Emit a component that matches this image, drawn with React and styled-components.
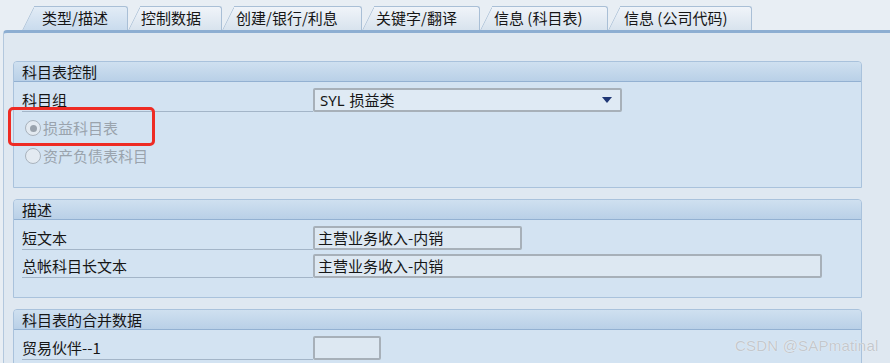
import React from "react";
import styled, { createGlobalStyle } from "styled-components";

const GlobalStyle = createGlobalStyle`
  html, body { margin: 0; padding: 0; }
  body {
    background: #e8eef4;
    font-family: "Noto Sans CJK SC", "Noto Sans", sans-serif;
    overflow: hidden;
  }
`;

const Page = styled.div`
  position: relative;
  width: 890px;
  height: 363px;
  overflow: hidden;
  background: #e8eef4;
`;

const TabStrip = styled.div`
  display: flex;
  align-items: flex-end;
  height: 30px;
  padding-left: 22px;
`;

const Tab = styled.div`
  position: relative;
  box-sizing: border-box;
  width: ${(p) => p.$w}px;
  height: 24px;
  padding-left: ${(p) => p.$pl}px;
  display: flex;
  align-items: center;
  font-size: 15px;
  line-height: 20px;
  color: #161616;
  white-space: nowrap;

  &::before {
    content: "";
    position: absolute;
    left: 0;
    top: 0;
    bottom: 0;
    width: 22px;
    box-sizing: border-box;
    background: ${(p) =>
      p.$active
        ? "linear-gradient(#e2ecf6, #c9dbed)"
        : "linear-gradient(#f0f4f9, #d8e3ee)"};
    border-left: 1px solid #a9bfd6;
    border-top: 1px solid #a9bfd6;
    border-top-left-radius: 3px;
    transform: skewX(-26.5deg);
    transform-origin: bottom left;
  }
  &::after {
    content: "";
    position: absolute;
    left: 12px;
    right: 0;
    top: 0;
    bottom: 0;
    box-sizing: border-box;
    background: ${(p) =>
      p.$active
        ? "linear-gradient(#e2ecf6, #c9dbed)"
        : "linear-gradient(#f0f4f9, #d8e3ee)"};
    border-top: 1px solid #a9bfd6;
    border-right: 1px solid #a9bfd6;
    border-top-right-radius: 3px;
  }
`;

const TabText = styled.span`
  position: relative;
  z-index: 1;
`;

const Content = styled.div`
  margin-left: 3px;
  border-top: 3px solid #8daed2;
  border-left: 1px solid #b3c8de;
  border-top-left-radius: 4px;
  background: #dfe8f1;
  padding: 28px 28px 0 9px;
  display: flex;
  flex-direction: column;
  gap: 11px;
  height: 400px;
`;

const Group = styled.section`
  position: relative;
  width: 849px;
  box-sizing: border-box;
  border: 1px solid #a9c2dc;
  border-radius: 4px 4px 0 0;
  background: #d3e3f2;
`;

const GroupHeader = styled.div`
  height: 19px;
  border-bottom: 1px solid #93b1d2;
  border-radius: 3px 3px 0 0;
  background: linear-gradient(#cfe0f0, #b9d0e7);
  padding-left: 8px;
  font-size: 15px;
  line-height: 19px;
  color: #161616;
`;

const GroupBody = styled.div`
  display: flex;
  flex-direction: column;
  gap: 4px;
  padding: 6px 8px 19px 8px;
`;

const Row = styled.div`
  display: flex;
  align-items: stretch;
  height: 24px;
`;

const Label = styled.div`
  width: 291px;
  box-sizing: border-box;
  border-bottom: 1px solid #a3b5c8;
  display: flex;
  align-items: center;
  font-size: 15px;
  color: #161616;
  line-height: 20px;
`;

const Field = styled.div`
  width: ${(p) => p.$w}px;
  box-sizing: border-box;
  height: 24px;
  border: 2px solid #a7b0b9;
  border-radius: 2px;
  background: #dde8f2;
  display: flex;
  align-items: center;
  padding-left: 3px;
  font-size: 15px;
  color: #161616;
  line-height: 20px;
`;

const Select = styled(Field)`
  justify-content: space-between;
  padding: 0 8px 0 5px;
  background: #dfeaf4;
`;

const Latin = styled.span`
  font-family: "Noto Sans", "Liberation Sans", sans-serif;
  margin-right: 5px;
`;

const Arrow = styled.span`
  width: 0;
  height: 0;
  border-left: 5px solid transparent;
  border-right: 5px solid transparent;
  border-top: 6px solid #1f3775;
`;

const RadioRow = styled.label`
  display: flex;
  align-items: center;
  height: 24px;
  padding-left: 3px;
  gap: 2px;
  font-size: 15px;
  color: #9aa3ad;
  line-height: 20px;
`;

const RadioCircle = styled.span`
  width: 16px;
  height: 16px;
  box-sizing: border-box;
  border-radius: 50%;
  border: 1px solid #a9b3bd;
  background: #e3eaf1;
  display: flex;
  align-items: center;
  justify-content: center;
  &::after {
    content: "";
    width: 7px;
    height: 7px;
    border-radius: 50%;
    background: ${(p) => (p.$checked ? "#9aa3ad" : "transparent")};
  }
`;

const Highlight = styled.div`
  position: absolute;
  left: -6px;
  top: 45px;
  width: 147px;
  height: 39px;
  box-sizing: border-box;
  border: 3px solid #ee2b24;
  border-radius: 5px;
  pointer-events: none;
`;

const Watermark = styled.div`
  position: absolute;
  left: 735px;
  top: 337px;
  font-family: "Liberation Sans", Arial, sans-serif;
  font-size: 15px;
  color: #c3c8cd;
  text-shadow: 0 0 1px #ffffff;
  letter-spacing: 0.2px;
`;

const tabs = [
  { t: "类型/描述", w: 106, pl: 20, active: true },
  { t: "控制数据", w: 94, pl: 13 },
  { t: "创建/银行/利息", w: 140, pl: 14 },
  { t: "关键字/翻译", w: 118, pl: 14 },
  { t: "信息 (科目表)", w: 128, pl: 14 },
  { t: "信息 (公司代码)", w: 144, pl: 16 },
];

export default function App() {
  return (
    <Page>
      <GlobalStyle />
      <TabStrip>
        {tabs.map((tab) => (
          <Tab key={tab.t} $w={tab.w} $pl={tab.pl} $active={tab.active}>
            <TabText>{tab.t}</TabText>
          </Tab>
        ))}
      </TabStrip>
      <Content>
        <Group>
          <GroupHeader>科目表控制</GroupHeader>
          <GroupBody>
            <Row>
              <Label>科目组</Label>
              <Select $w={309}>
                <span>
                  <Latin>SYL</Latin>损益类
                </span>
                <Arrow />
              </Select>
            </Row>
            <RadioRow>
              <RadioCircle $checked />
              损益科目表
            </RadioRow>
            <RadioRow>
              <RadioCircle />
              资产负债表科目
            </RadioRow>
          </GroupBody>
          <Highlight />
        </Group>
        <Group>
          <GroupHeader>描述</GroupHeader>
          <GroupBody>
            <Row>
              <Label>短文本</Label>
              <Field $w={209}>主营业务收入-内销</Field>
            </Row>
            <Row>
              <Label>总帐科目长文本</Label>
              <Field $w={509}>主营业务收入-内销</Field>
            </Row>
          </GroupBody>
        </Group>
        <Group>
          <GroupHeader>科目表的合并数据</GroupHeader>
          <GroupBody>
            <Row>
              <Label>贸易伙伴--1</Label>
              <Field $w={68} />
            </Row>
          </GroupBody>
        </Group>
      </Content>
      <Watermark>CSDN @SAPmatinal</Watermark>
    </Page>
  );
}
